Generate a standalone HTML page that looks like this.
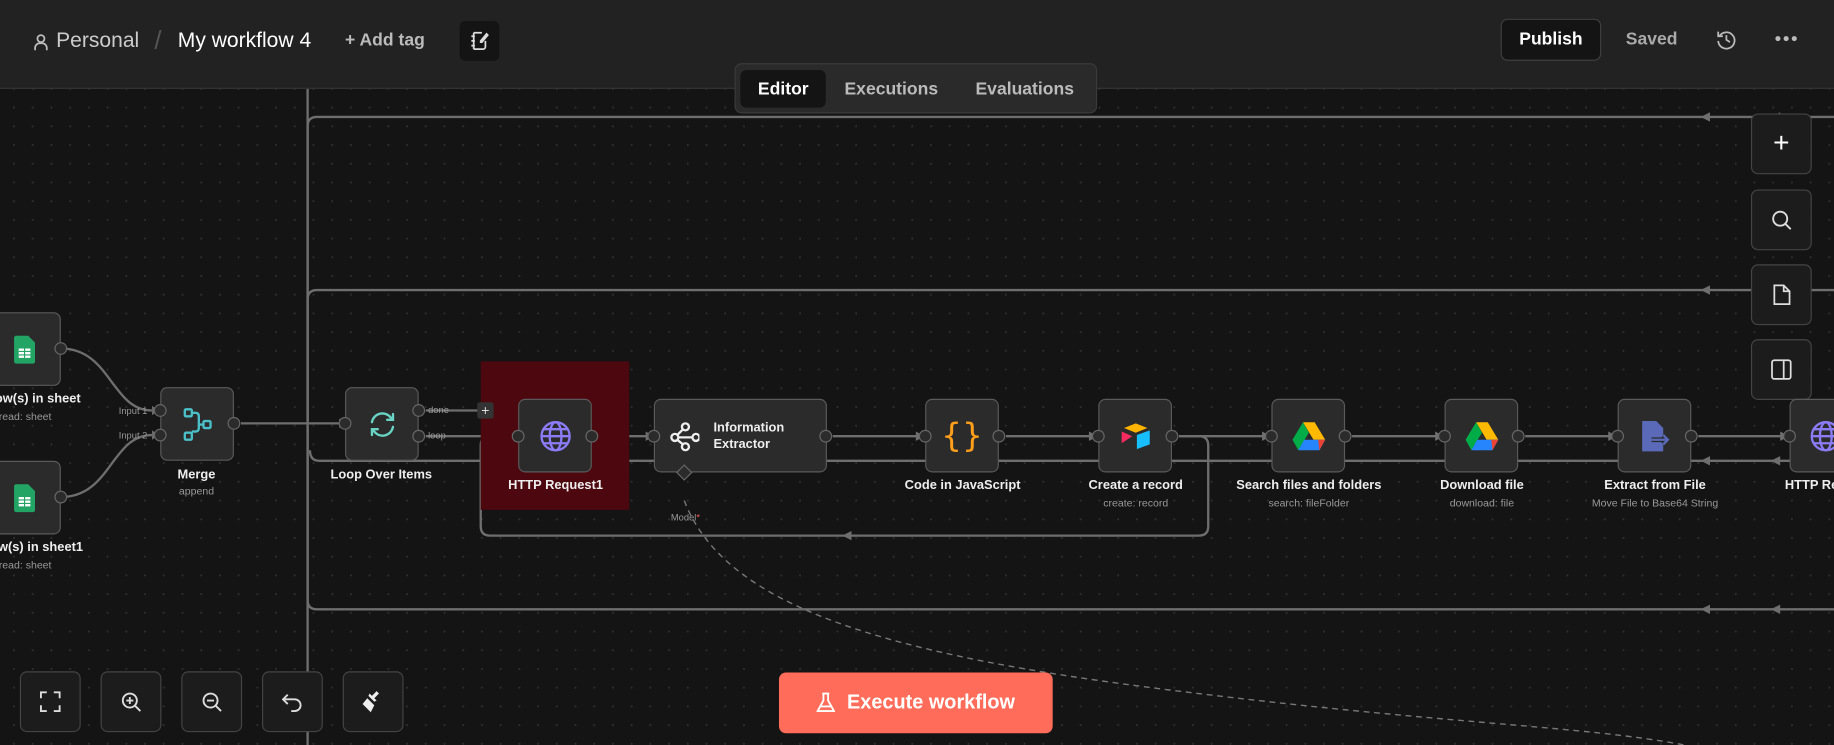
<!DOCTYPE html>
<html><head><meta charset="utf-8"><style>
html,body{margin:0;padding:0;background:#141414;overflow:hidden;width:1834px;height:745px}
#w{position:absolute;left:0;top:0;width:1568px;height:637px;transform:scale(1.16964,1.1695);transform-origin:0 0;font-family:"Liberation Sans",sans-serif;
background-color:#141414;background-image:radial-gradient(circle,#2e2e2e 0.8px,transparent 1px);background-size:16px 16px;background-position:4px 4px}
.hdr{position:absolute;left:0;top:0;width:1568px;height:75px;background:#222;border-bottom:1px solid #353535}
.a{position:absolute}
.btn{position:absolute;width:52px;height:52px;background:#1c1c1c;border:1px solid #444;border-radius:6px;box-sizing:border-box;display:flex;align-items:center;justify-content:center}
.node{position:absolute;width:63px;height:63px;background:#2b2b2b;border:1px solid #5a5a5a;border-radius:6px;box-sizing:border-box;display:flex;align-items:center;justify-content:center}
.lbl{position:absolute;color:#eee;font-size:11px;font-weight:bold;text-align:center;width:200px;white-space:nowrap}
.sub{position:absolute;color:#999;font-size:9px;text-align:center;width:200px;white-space:nowrap}
</style></head><body><div id="w">
<svg class="a" style="left:0;top:0" width="1568" height="637" viewBox="0 0 1568 637">
<g fill="none" stroke="#6e6e6e" stroke-width="2">
<line x1="263" y1="76" x2="263" y2="637"/>
<path d="M263 360 V108 Q263 100 271 100 H1568"/>
<path d="M263 360 V256 Q263 248 271 248 H1568"/>
<path d="M263 365 V513 Q263 521 271 521 H1568"/>
<path d="M265 385 Q265 394 273 394 H1568"/>
<path d="M52 298 C95 298 95 351 130 351"/>
<path d="M52 425 C95 425 95 372 130 372"/>
<path d="M206 362 H290"/>
<path d="M364 351 H410"/>
<path d="M364 373 H437"/>
<path d="M512 373 H553"/>
<path d="M712 373 H785"/>
<path d="M860 373 H933"/>
<path d="M1008 373 H1081"/>
<path d="M1008 373 H1025 Q1033 373 1033 381 V450 Q1033 458 1025 458 H419 Q411 458 411 450 V381 Q411 373 419 373"/>
<path d="M1156 373 H1229"/>
<path d="M1304 373 H1377"/>
<path d="M1452 373 H1524"/>
</g>
<g fill="#6e6e6e">
<path d="M1454 100 l8 -4 v8z"/><path d="M1514 100 l8 -4 v8z"/>
<path d="M1454 248 l8 -4 v8z"/><path d="M1514 248 l8 -4 v8z"/>
<path d="M1454 521 l8 -4 v8z"/><path d="M1514 521 l8 -4 v8z"/>
<path d="M1454 394 l8 -4 v8z"/><path d="M1514 394 l8 -4 v8z"/>
<path d="M720 458 l8 -4 v8z"/>
<path d="M298 362 l-8 -4 v8z"/><path d="M444 373 l-8 -4 v8z"/><path d="M560 373 l-8 -4 v8z"/>
<path d="M791 373 l-8 -4 v8z"/><path d="M939 373 l-8 -4 v8z"/><path d="M1087 373 l-8 -4 v8z"/><path d="M1235 373 l-8 -4 v8z"/><path d="M1383 373 l-8 -4 v8z"/><path d="M1530 373 l-8 -4 v8z"/>
<path d="M136 351 l-6 -4 v8z"/><path d="M136 372 l-6 -4 v8z"/>
</g>
<path d="M585 428 C620 520 760 560 1000 590 S1350 620 1440 637" fill="none" stroke="#777" stroke-width="1.2" stroke-dasharray="5 4"/>
<rect x="411" y="309" width="127" height="127" fill="#4c080e"/>
</svg>
<div class="hdr">
<svg class="a" style="left:28px;top:28px" width="14" height="16" viewBox="0 0 14 16" fill="none" stroke="#bbb" stroke-width="1.5"><circle cx="7" cy="5" r="3"/><path d="M2 15v-2a4 4 0 0 1 4-4h2a4 4 0 0 1 4 4v2"/></svg>
<div class="a" style="left:48px;top:24px;color:#ccc;font-size:18px">Personal</div>
<div class="a" style="left:132px;top:22px;color:#555;font-size:22px">/</div>
<div class="a" style="left:152px;top:24px;color:#fff;font-size:18px">My workflow 4</div>
<div class="a" style="left:295px;top:26px;color:#bbb;font-size:15px;font-weight:bold">+ Add tag</div>
<div class="a" style="left:393px;top:18px;width:34px;height:34px;background:#141414;border-radius:5px"></div>
<svg class="a" style="left:402px;top:26px" width="16" height="18" viewBox="0 0 16 18" fill="none" stroke="#ddd" stroke-width="1.5"><path d="M3 2h7M3 16h8a2 2 0 0 0 2-2V9M3 2v14M1 5h3M1 9h3M1 13h3M9 9l5-6 1 1-5 6h-1z"/></svg>
<div class="a" style="left:1283px;top:16px;width:86px;height:36px;background:#141414;border:1px solid #3f3f3f;border-radius:6px;box-sizing:border-box;color:#fff;font-size:15px;font-weight:bold;text-align:center;line-height:34px">Publish</div>
<div class="a" style="left:1390px;top:25px;color:#aaa;font-size:15px;font-weight:bold">Saved</div>
<svg class="a" style="left:1467px;top:25px" width="18" height="18" viewBox="0 0 18 18" fill="none" stroke="#bbb" stroke-width="1.5"><path d="M3 6a7 7 0 1 1-1 4M2 2v4h4M9 5v4l3 2"/></svg>
<div class="a" style="left:1517px;top:28px;color:#bbb;font-size:10px;letter-spacing:1px">●●●</div>
</div>
<div class="a" style="left:628px;top:54px;width:310px;height:43px;background:#2a2a2a;border:1px solid #3a3a3a;border-radius:6px;box-sizing:border-box"></div>
<div class="a" style="left:633px;top:60px;width:73px;height:32px;background:#141414;border-radius:5px"></div>
<div class="a" style="left:648px;top:68px;color:#fff;font-size:15px;font-weight:bold">Editor</div>
<div class="a" style="left:722px;top:68px;color:#bbb;font-size:15px;font-weight:bold">Executions</div>
<div class="a" style="left:834px;top:68px;color:#bbb;font-size:15px;font-weight:bold">Evaluations</div>

<div class="btn" style="left:1497px;top:97px;color:#fff;font-size:24px;font-weight:300">+</div>
<div class="btn" style="left:1497px;top:162px"><svg width="18" height="18" fill="none" stroke="#ddd" stroke-width="1.6"><circle cx="8" cy="8" r="6"/><path d="M12.5 12.5L17 17"/></svg></div>
<div class="btn" style="left:1497px;top:226px"><svg width="16" height="18" fill="none" stroke="#ddd" stroke-width="1.5"><path d="M2 1h8l5 5v11H2zM10 1v5h5"/></svg></div>
<div class="btn" style="left:1497px;top:290px"><svg width="18" height="18" fill="none" stroke="#ddd" stroke-width="1.5"><rect x="1" y="1" width="16" height="16" rx="2"/><path d="M11 1v16"/></svg></div>

<div class="node" style="left:-11px;top:267px"><svg width="18" height="24"><path d="M0 2a2 2 0 0 1 2-2h10l6 6v16a2 2 0 0 1-2 2H2a2 2 0 0 1-2-2z" fill="#21a464"/><rect x="4" y="11" width="10" height="8" fill="#fff"/><path d="M4 13.5h10M4 16.5h10M9 11v8" stroke="#21a464"/></svg></div>
<div class="node" style="left:-11px;top:394px"><svg width="18" height="24"><path d="M0 2a2 2 0 0 1 2-2h10l6 6v16a2 2 0 0 1-2 2H2a2 2 0 0 1-2-2z" fill="#21a464"/><rect x="4" y="11" width="10" height="8" fill="#fff"/><path d="M4 13.5h10M4 16.5h10M9 11v8" stroke="#21a464"/></svg></div>
<div class="lbl" style="left:-200px;top:335px;text-align:right;width:269px">ow(s) in sheet</div><div class="sub" style="left:-200px;top:351px;text-align:right;width:244px">read: sheet</div>
<div class="lbl" style="left:-200px;top:462px;text-align:right;width:271px">ow(s) in sheet1</div><div class="sub" style="left:-200px;top:478px;text-align:right;width:244px">read: sheet</div>

<div class="node" style="left:137px;top:331px"><svg width="26" height="30" fill="none" stroke="#4bc0c8" stroke-width="2"><rect x="2" y="2" width="6" height="6" rx="1"/><rect x="2" y="22" width="6" height="6" rx="1"/><rect x="18" y="12" width="6" height="6" rx="1"/><path d="M8 5h3q3 0 3 3v10q0 3-3 3H8M14 15h4"/></svg></div>
<div class="sub" style="left:60px;top:347px;width:66px;text-align:right;font-size:8px">Input 1</div>
<div class="sub" style="left:60px;top:368px;width:66px;text-align:right;font-size:8px">Input 2</div>
<div class="lbl" style="left:68px;top:400px">Merge</div><div class="sub" style="left:68px;top:415px">append</div>

<div class="node" style="left:295px;top:331px"><svg width="24" height="24" fill="none" stroke="#6ad4c4" stroke-width="2" stroke-linecap="round"><path d="M3 10a9 9 0 0 1 16-4l2 2M21 3v5h-5M21 14a9 9 0 0 1-16 4l-2-2M3 21v-5h5"/></svg></div>
<div class="sub" style="left:366px;top:346px;width:30px;text-align:left;font-size:8px">done</div>
<div class="sub" style="left:366px;top:368px;width:30px;text-align:left;font-size:8px">loop</div>
<div class="a" style="left:408px;top:344px;width:14px;height:14px;background:#333;border-radius:2px;color:#ddd;font-size:12px;line-height:14px;text-align:center">+</div>
<div class="lbl" style="left:226px;top:400px">Loop Over Items</div>

<div class="node" style="left:443px;top:341px"><svg width="28" height="28" fill="none" stroke="#8b7cf6" stroke-width="2"><circle cx="14" cy="14" r="12"/><ellipse cx="14" cy="14" rx="5" ry="12"/><path d="M2 14h24M4 8h20M4 20h20"/></svg></div>
<div class="lbl" style="left:375px;top:409px">HTTP Request1</div>

<div class="node" style="left:559px;top:341px;width:148px;justify-content:flex-start;padding-left:12px"><svg width="26" height="26" fill="none" stroke="#eee" stroke-width="2"><circle cx="14" cy="5" r="3"/><circle cx="5" cy="14" r="3"/><circle cx="14" cy="22" r="3"/><circle cx="23" cy="14" r="3"/><path d="M8 14h12M7 12l5-5M7 16l5 4"/></svg><div style="color:#eee;font-size:11px;font-weight:bold;margin-left:12px;line-height:14px">Information<br>Extractor</div></div>
<div class="a" style="left:580px;top:399px;width:8px;height:8px;background:#2b2b2b;border:1px solid #666;transform:rotate(45deg)"></div>
<div class="sub" style="left:486px;top:438px;font-size:8px">Model<span style="color:#f55">*</span></div>

<div class="node" style="left:791px;top:341px;color:#ff9f1a;font-size:28px;font-family:'DejaVu Sans',sans-serif">{}</div>
<div class="lbl" style="left:723px;top:409px">Code in JavaScript</div>

<div class="node" style="left:939px;top:341px"><svg width="28" height="26"><path d="M14 2l10 4-10 4-10-4z" fill="#fcb400"/><path d="M15 12l11-4v12l-11 4z" fill="#18bfff"/><path d="M2 9l9 4-9 6z" fill="#f82b60"/></svg></div>
<div class="lbl" style="left:871px;top:409px">Create a record</div><div class="sub" style="left:871px;top:425px">create: record</div>

<div class="node" style="left:1087px;top:341px"><svg width="28" height="26"><path d="M9 1h10l9 15h-10z" fill="#ffba00"/><path d="M9 1l5 9-9 15-5-9z" fill="#00ac47"/><path d="M5 25l5-9h18l-5 9z" fill="#2684fc"/><path d="M23 25l5-9h-6z" fill="#ea4335"/></svg></div>
<div class="lbl" style="left:1019px;top:409px">Search files and folders</div><div class="sub" style="left:1019px;top:425px">search: fileFolder</div>

<div class="node" style="left:1235px;top:341px"><svg width="28" height="26"><path d="M9 1h10l9 15h-10z" fill="#ffba00"/><path d="M9 1l5 9-9 15-5-9z" fill="#00ac47"/><path d="M5 25l5-9h18l-5 9z" fill="#2684fc"/><path d="M23 25l5-9h-6z" fill="#ea4335"/></svg></div>
<div class="lbl" style="left:1167px;top:409px">Download file</div><div class="sub" style="left:1167px;top:425px">download: file</div>

<div class="node" style="left:1383px;top:341px"><svg width="30" height="30"><path d="M4 2h12l6 6v20H4z" fill="#5b6ab8"/><path d="M12 18h14M22 14l4 4-4 4" fill="none" stroke="#2b2b2b" stroke-width="4"/><path d="M12 18h14M22 14l4 4-4 4" fill="none" stroke="#5b6ab8" stroke-width="2"/></svg></div>
<div class="lbl" style="left:1315px;top:409px">Extract from File</div><div class="sub" style="left:1315px;top:425px">Move File to Base64 String</div>

<div class="node" style="left:1530px;top:341px;justify-content:flex-start;padding-left:16px"><svg width="28" height="28" fill="none" stroke="#8b7cf6" stroke-width="2"><circle cx="14" cy="14" r="12"/><ellipse cx="14" cy="14" rx="5" ry="12"/><path d="M2 14h24M4 8h20M4 20h20"/></svg></div>
<div class="lbl" style="left:1526px;top:409px;width:60px;text-align:left">HTTP Re</div>

<svg class="a" style="left:0;top:0;pointer-events:none" width="1568" height="637">
<g fill="#2b2b2b" stroke="#666" stroke-width="1">
<circle cx="52" cy="298" r="5"/><circle cx="52" cy="425" r="5"/>
<circle cx="137" cy="351" r="5"/><circle cx="137" cy="372" r="5"/><circle cx="200" cy="362" r="5"/>
<circle cx="295" cy="362" r="5"/><circle cx="358" cy="351" r="5"/><circle cx="358" cy="373" r="5"/>
<circle cx="443" cy="373" r="5"/><circle cx="506" cy="373" r="5"/>
<circle cx="559" cy="373" r="5"/><circle cx="706" cy="373" r="5"/>
<circle cx="791" cy="373" r="5"/><circle cx="854" cy="373" r="5"/>
<circle cx="939" cy="373" r="5"/><circle cx="1002" cy="373" r="5"/>
<circle cx="1087" cy="373" r="5"/><circle cx="1150" cy="373" r="5"/>
<circle cx="1235" cy="373" r="5"/><circle cx="1298" cy="373" r="5"/>
<circle cx="1383" cy="373" r="5"/><circle cx="1446" cy="373" r="5"/>
<circle cx="1530" cy="373" r="5"/>
</g></svg>

<div class="btn" style="left:17px;top:574px"><svg width="18" height="18" fill="none" stroke="#ddd" stroke-width="1.6"><path d="M1 6V1h5M12 1h5v5M17 12v5h-5M6 17H1v-5"/></svg></div>
<div class="btn" style="left:86px;top:574px"><svg width="18" height="18" fill="none" stroke="#ddd" stroke-width="1.6"><circle cx="8" cy="8" r="6"/><path d="M12.5 12.5L17 17M5 8h6M8 5v6"/></svg></div>
<div class="btn" style="left:155px;top:574px"><svg width="18" height="18" fill="none" stroke="#ddd" stroke-width="1.6"><circle cx="8" cy="8" r="6"/><path d="M12.5 12.5L17 17M5 8h6"/></svg></div>
<div class="btn" style="left:224px;top:574px"><svg width="18" height="18" fill="none" stroke="#ddd" stroke-width="1.6"><path d="M5 3L1 7l4 4M1 7h10a5 5 0 0 1 0 10H8"/></svg></div>
<div class="btn" style="left:293px;top:574px"><svg width="20" height="20" fill="#eee"><path d="M13 1l2 2-4 4 2 2-2 1-5-5 1-2 2 2zM5 7l6 6-3 6-7-7z"/></svg></div>
<div class="a" style="left:666px;top:575px;width:234px;height:52px;background:#ff6d5a;border-radius:6px;color:#fff;font-size:17px;font-weight:bold;display:flex;align-items:center;justify-content:center">
<svg width="16" height="18" fill="none" stroke="#fff" stroke-width="1.6" style="margin-right:10px"><path d="M5 1h6M6 1v6L1 16h14L10 7V1M3.5 12h9"/></svg>Execute workflow</div>
</div></body></html>
